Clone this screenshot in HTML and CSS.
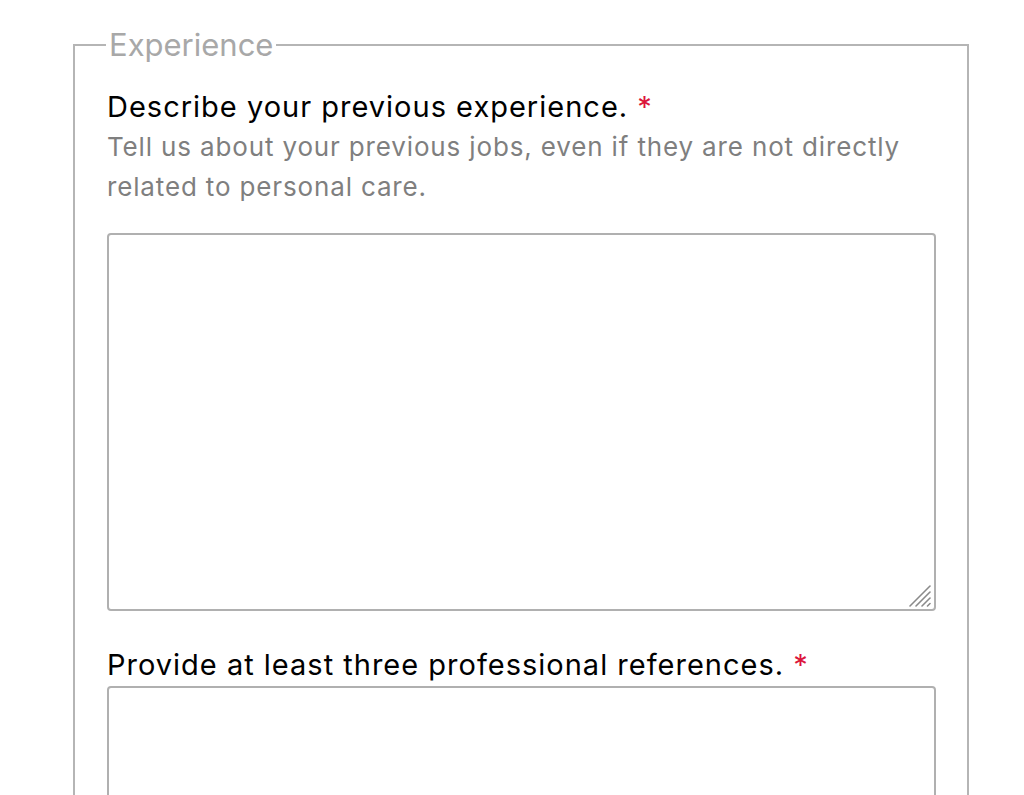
FILE: index.html
```html
<!DOCTYPE html>
<html>
<head>
<meta charset="utf-8">
<link rel="stylesheet" href="styles.css">
</head>
<body>
<form class="form">
  <fieldset class="group">
    <legend class="group-title">Experience</legend>
    <div class="field">
      <label class="label" for="exp">Describe your previous experience. <span class="req">*</span></label>
      <p class="hint">Tell us about your previous jobs, even if they are not directly related to personal care.</p>
      <div class="area-wrap area-big">
        <textarea id="exp" class="area"></textarea>
        <svg class="grip" width="26" height="26" viewBox="0 0 26 26" aria-hidden="true">
          <g stroke="#8a8a8a" stroke-width="1.6" stroke-linecap="round">
            <line x1="3" y1="23" x2="23" y2="3"/>
            <line x1="9" y1="23" x2="23" y2="9"/>
            <line x1="15" y1="23" x2="23" y2="15"/>
            <line x1="20.5" y1="23" x2="23" y2="20.5"/>
          </g>
        </svg>
      </div>
    </div>
    <div class="field">
      <label class="label" for="refs">Provide at least three professional references. <span class="req">*</span></label>
      <div class="area-wrap area-small">
        <textarea id="refs" class="area"></textarea>
      </div>
    </div>
  </fieldset>
</form>
</body>
</html>
```
FILE: styles.css
```css
html, body {
  margin: 0;
  padding: 0;
  background: #fff;
  overflow: hidden;
}
body {
  font-family: Inter, "Liberation Sans", sans-serif;
  color: #000;
}
.form {
  padding: 27px 0 0 73px;
}
.group {
  width: 829px;
  margin: 0;
  border: 2px solid #b5b5b5;
  padding: 24px 31px 40px 32px;
}
.group-title {
  font-size: 31px;
  color: #a8a8a8;
  padding: 0 3px;
  margin-left: -1px;
  line-height: 36px;
}
.field {
  display: flex;
  flex-direction: column;
}
.label {
  font-size: 29px;
  letter-spacing: 1px;
  line-height: 40px;
}
.req {
  color: #dc143c;
}
.hint {
  margin: 0;
  font-size: 26px;
  letter-spacing: 0.85px;
  line-height: 40px;
  color: #7f7f7f;
}
.area-wrap {
  position: relative;
  width: 829px;
}
.area {
  display: block;
  box-sizing: border-box;
  width: 100%;
  height: 100%;
  margin: 0;
  border: 2px solid #b0b0b0;
  border-radius: 4px;
  font: inherit;
  resize: none;
}
.grip {
  position: absolute;
  right: 3px;
  bottom: 2px;
  pointer-events: none;
}
.area-big {
  margin-top: 26px;
  height: 378px;
  margin-bottom: 34px;
}
.area-small {
  margin-top: 1px;
  height: 200px;
}
```
